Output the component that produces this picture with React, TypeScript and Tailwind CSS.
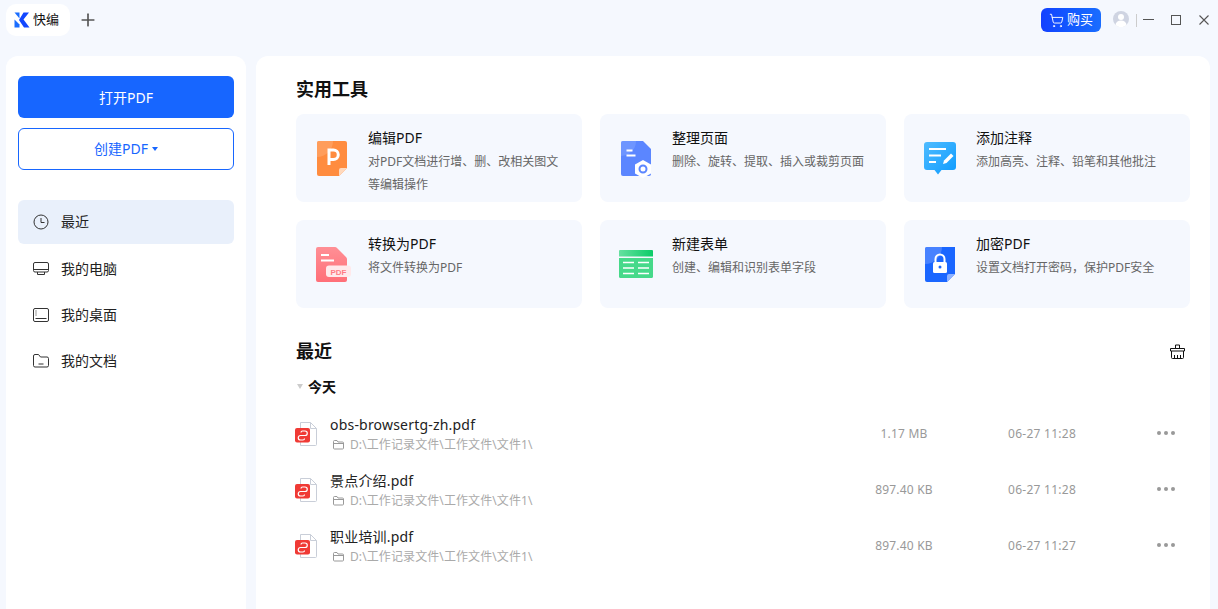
import { Plus, ShoppingCart } from 'lucide-react';
import type { ReactNode } from 'react';

const FONT = "font-['Noto_Sans','Noto_Sans_CJK_SC',sans-serif]";

function Logo() {
  return (
    <svg width="16" height="16" viewBox="0 0 16 16">
      <path d="M0.500 0.500h5v6z" fill="#1a6dff" />
      <path d="M0.500 7.500l5 5v3h-5z" fill="#1a6dff" />
      <path d="M9.500 0.500h5.500L9.500 7.500l6 8h-5.500L5 8z" fill="#1247ff" />
    </svg>
  );
}

function ClockIcon() {
  return (
    <svg width="16" height="16" viewBox="0 0 16 16" fill="none" stroke="#333" strokeWidth="1">
      <circle cx="8" cy="8" r="7" />
      <path d="M8 4v4.500h3.500" />
    </svg>
  );
}

function MonitorIcon() {
  return (
    <svg width="16" height="16" viewBox="0 0 16 16" fill="none" stroke="#333" strokeWidth="1">
      <rect x="0.500" y="1.500" width="15" height="9.500" rx="1.500" />
      <path d="M0.500 8.500h15M4.500 11v2.500h7V11" />
    </svg>
  );
}

function DesktopIcon() {
  return (
    <svg width="16" height="16" viewBox="0 0 16 16" fill="none" stroke="#333" strokeWidth="1">
      <rect x="0.500" y="1.500" width="15" height="13" rx="1.500" />
      <path d="M2.500 11.500h11M2.500 4h1M2.500 6h1M2.500 8h1" />
    </svg>
  );
}

function FolderIcon() {
  return (
    <svg width="16" height="16" viewBox="0 0 16 16" fill="none" stroke="#333" strokeWidth="1">
      <path d="M0.500 3a1.500 1.500 0 0 1 1.500-1.500h3.500l2 2.500h6.500a1.500 1.500 0 0 1 1.500 1.500v7a1.500 1.500 0 0 1-1.500 1.500h-12a1.500 1.500 0 0 1-1.500-1.500z" />
      <path d="M5.500 11h5" />
    </svg>
  );
}

function BasketIcon() {
  return (
    <svg width="15" height="15" viewBox="0 0 15 15" fill="none" stroke="#111" strokeWidth="1">
      <path d="M5.500 4.500V1h4v3.500M0.500 7V4.500h14V7z" />
      <path d="M1.500 7v6.500a1 1 0 0 0 1 1h10a1 1 0 0 0 1-1V7M4.500 14.500V11M7.500 14.500V11M10.500 14.500V11" />
    </svg>
  );
}

function PptIcon() {
  return (
    <svg width="40" height="40" viewBox="0 0 40 40">
      <path d="M7 3h26a2 2 0 0 1 2 2v25l-8 8H7a2 2 0 0 1-2-2V5a2 2 0 0 1 2-2z" fill="#ff8c3f" />
      <path d="M5 5a2 2 0 0 1 2-2h14a16 16 0 0 1-16 16z" fill="#ffa468" opacity="0.7" />
      <path d="M35 30h-6a2 2 0 0 0-2 2v6z" fill="#ffd9bd" />
      <path d="M17 27V12h4.500a4.500 4.500 0 0 1 0 9.500H17" fill="none" stroke="#fff" strokeWidth="3" />
    </svg>
  );
}

function PagesIcon() {
  return (
    <svg width="40" height="40" viewBox="0 0 40 40">
      <path d="M7 3h20l8 8v25a2 2 0 0 1-2 2H7a2 2 0 0 1-2-2V5a2 2 0 0 1 2-2z" fill="#5b86ff" />
      <path d="M5 5a2 2 0 0 1 2-2h13a15 15 0 0 1-15 15z" fill="#7ba0ff" opacity="0.6" />
      <path d="M10.500 12.500h6M10.500 17.500h9" stroke="#fff" strokeWidth="2" />
      <path d="M27 22l8 4.500v9L27 40l-8-4.500v-9z" fill="#fff" />
      <circle cx="27" cy="31" r="3.500" fill="none" stroke="#5b86ff" strokeWidth="2" />
    </svg>
  );
}

function NoteIcon() {
  return (
    <svg width="40" height="40" viewBox="0 0 40 40">
      <defs>
        <linearGradient id="noteFill" x1="0" y1="0" x2="1" y2="1">
          <stop offset="0" stopColor="#4fbcff" />
          <stop offset="1" stopColor="#0d9bff" />
        </linearGradient>
      </defs>
      <path d="M7 4h26a3 3 0 0 1 3 3v22a3 3 0 0 1-3 3H21.500l-3.500 4.500-3.500-4.500H7a3 3 0 0 1-3-3V7a3 3 0 0 1 3-3z" fill="url(#noteFill)" />
      <path d="M9 11h17M9 17.500h12M9 24h7" stroke="#fff" strokeWidth="2" />
      <path d="M23 26l1-3.500 7-7 2.500 2.500-7 7z" fill="#fff" />
    </svg>
  );
}

function ConvertIcon() {
  return (
    <svg width="40" height="40" viewBox="0 0 40 40">
      <defs>
        <linearGradient id="convertFill" x1="0" y1="0" x2="0" y2="1">
          <stop offset="0" stopColor="#ff8f95" />
          <stop offset="1" stopColor="#ff6f78" />
        </linearGradient>
      </defs>
      <path d="M6 3h17a3 3 0 0 1 2 1l9 9a3 3 0 0 1 1 2v21a2 2 0 0 1-2 2H6a2 2 0 0 1-2-2V5a2 2 0 0 1 2-2z" fill="url(#convertFill)" />
      <path d="M9 11h8M9 16.500h13" stroke="#fff" strokeWidth="2" />
      <rect x="14" y="21.500" width="25" height="11.500" rx="3" fill="#ffe9eb" />
      <text x="26.500" y="30.500" textAnchor="middle" fontSize="8" fontWeight="700" fill="#ff7b83" fontFamily="'Liberation Sans',sans-serif">PDF</text>
    </svg>
  );
}

function TableIcon() {
  return (
    <svg width="40" height="40" viewBox="0 0 40 40">
      <defs>
        <linearGradient id="tableHead" x1="0" y1="0" x2="1" y2="0">
          <stop offset="0" stopColor="#66e0a0" />
          <stop offset="1" stopColor="#0ccc68" />
        </linearGradient>
      </defs>
      <path d="M3 7a1 1 0 0 1 1-1h32a1 1 0 0 1 1 1v5.500H3z" fill="url(#tableHead)" />
      <path d="M3 14h34v18.500a1.500 1.500 0 0 1-1.500 1.500h-31A1.500 1.500 0 0 1 3 32.500z" fill="#46d98a" />
      <path d="M7 18.500h11M22 18.500h11M7 24h11M22 24h11M7 29.500h11M22 29.500h11" stroke="#fff" strokeWidth="1.500" />
    </svg>
  );
}

function LockIcon() {
  return (
    <svg width="40" height="40" viewBox="0 0 40 40">
      <path d="M7 3h28v27l-8 8H7a2 2 0 0 1-2-2V5a2 2 0 0 1 2-2z" fill="#1a66ff" />
      <path d="M5 5a2 2 0 0 1 2-2h15a17 17 0 0 1-17 17z" fill="#5b8eff" opacity="0.7" />
      <path d="M35 30h-6a2 2 0 0 0-2 2v6z" fill="#8fb2ff" />
      <rect x="13" y="18" width="14" height="11" rx="1.500" fill="#fff" />
      <path d="M15.500 18v-3a4.500 4.500 0 0 1 9 0v3" fill="none" stroke="#fff" strokeWidth="2" />
      <circle cx="20" cy="23" r="1.500" fill="#1a66ff" />
    </svg>
  );
}

function PdfFileIcon() {
  return (
    <svg className="-ml-px" width="22" height="24" viewBox="0 0 22 24">
      <path d="M5.500 0.500h10l6 6v16a1 1 0 0 1-1 1h-15z" fill="#fff" stroke="#c9ced8" />
      <path d="M15.500 0.500v6h6" fill="none" stroke="#c9ced8" />
      <rect x="0" y="6" width="15" height="14.500" rx="2" fill="#f03a35" />
      <path d="M6 10.500a1.500 1.500 0 0 1 1.500-1.500h2.500a2.200 2.200 0 0 1 0 4.500h-4.500a2.200 2.200 0 0 0 0 4.500h2.500a1.500 1.500 0 0 0 1.500-1.500" fill="none" stroke="#fff" strokeWidth="1.200" />
    </svg>
  );
}

function SmallFolder() {
  return (
    <svg width="11" height="10" viewBox="0 0 11 10" fill="none" stroke="#999" strokeWidth="1">
      <path d="M0.500 1.500a1 1 0 0 1 1-1h2.500l1 1.500h4.500a1 1 0 0 1 1 1v5a1 1 0 0 1-1 1h-8a1 1 0 0 1-1-1zM0.500 3.500h10" />
    </svg>
  );
}

function Avatar() {
  return (
    <svg width="16" height="16" viewBox="0 0 16 16">
      <circle cx="8" cy="8" r="8" fill="#cfd4e2" />
      <circle cx="8" cy="6" r="3" fill="#fff" />
      <path d="M2.500 14a5.500 4.500 0 0 1 11 0 8 8 0 0 1-11 0z" fill="#fff" />
    </svg>
  );
}

const navItems: { icon: ReactNode; label: string; active?: boolean }[] = [
  { icon: <ClockIcon />, label: '最近', active: true },
  { icon: <MonitorIcon />, label: '我的电脑' },
  { icon: <DesktopIcon />, label: '我的桌面' },
  { icon: <FolderIcon />, label: '我的文档' },
];

const tools: { icon: ReactNode; title: string; desc: string }[] = [
  { icon: <PptIcon />, title: '编辑PDF', desc: '对PDF文档进行增、删、改相关图文等编辑操作' },
  { icon: <PagesIcon />, title: '整理页面', desc: '删除、旋转、提取、插入或裁剪页面' },
  { icon: <NoteIcon />, title: '添加注释', desc: '添加高亮、注释、铅笔和其他批注' },
  { icon: <ConvertIcon />, title: '转换为PDF', desc: '将文件转换为PDF' },
  { icon: <TableIcon />, title: '新建表单', desc: '创建、编辑和识别表单字段' },
  { icon: <LockIcon />, title: '加密PDF', desc: '设置文档打开密码，保护PDF安全' },
];

const files = [
  { name: 'obs-browsertg-zh.pdf', size: '1.17 MB', date: '06-27 11:28' },
  { name: '景点介绍.pdf', size: '897.40 KB', date: '06-27 11:28' },
  { name: '职业培训.pdf', size: '897.40 KB', date: '06-27 11:27' },
];

export default function App() {
  return (
    <div className={`h-screen overflow-hidden bg-[#f5f8fe] flex flex-col ${FONT}`}>
      {/* Title bar */}
      <div className="h-[56px] shrink-0 flex items-start pt-[4px] pl-[6px]">
        <div className="h-[32px] w-[64px] bg-white rounded-[10px] flex items-center pl-[8px] gap-[3px]">
          <Logo />
          <span className="text-[13px] text-[#111]">快编</span>
        </div>
        <button className="ml-[8px] h-[32px] w-[20px] flex items-center justify-center text-[#555]">
          <Plus size={20} strokeWidth={2} />
        </button>
        <div className="ml-auto flex items-center pt-[4px] pr-[9px]">
          <button className="w-[60px] h-[24px] rounded-[6px] bg-linear-to-r from-[#1440ff] to-[#1a6dff] text-white text-[13px] flex items-center justify-center gap-[3px]">
            <ShoppingCart size={15} strokeWidth={1.5} />
            购买
          </button>
          <div className="ml-[12px] -mt-[2px]">
            <Avatar />
          </div>
          <div className="ml-[7px] w-px h-[13px] bg-[#ccc]" />
          <div className="ml-[6px] -mt-[2px] w-[11px] h-px bg-[#555]" />
          <div className="ml-[17px] w-[10px] h-[10px] border border-[#555]" />
          <svg className="ml-[18px]" width="10" height="10" viewBox="0 0 10 10" stroke="#555" strokeWidth="1.100">
            <path d="M0.500 0.500l9 9M9.500 0.500l-9 9" />
          </svg>
        </div>
      </div>

      <div className="flex-1 flex gap-[10px] min-h-0 pl-[6px] pr-[8px]">
        {/* Sidebar */}
        <aside className="w-[240px] shrink-0 bg-white rounded-t-[12px] px-[12px] pt-[20px]">
          <button className="w-full h-[42px] rounded-[6px] bg-[#1766ff] text-white text-[14px]">打开PDF</button>
          <button className="mt-[10px] w-full h-[42px] pb-[2px] rounded-[6px] border border-[#1766ff] text-[#1766ff] text-[14px] flex items-center justify-center gap-[4px]">
            创建PDF
            <span className="mt-[2px] w-0 h-0 border-x-[3.5px] border-x-transparent border-t-[4px] border-t-[#1766ff]" />
          </button>
          <nav className="mt-[30px] flex flex-col">
            {navItems.map((item, i) => (
              <div
                key={item.label}
                className={`h-[44px] rounded-[6px] flex items-center pl-[15px] gap-[12px] text-[14px] text-[#222] ${item.active ? 'bg-[#e9f0fb]' : ''} ${i === 1 ? 'mt-[3px]' : i > 1 ? 'mt-[2px]' : ''}`}
              >
                {item.icon}
                <span className="pb-[2px]">{item.label}</span>
              </div>
            ))}
          </nav>
        </aside>

        {/* Main */}
        <main className="flex-1 bg-white rounded-t-[12px] pl-[40px] pr-[20px] pt-[20px]">
          <h2 className="text-[18px] leading-[26px] font-bold text-[#111]">实用工具</h2>
          <div className="mt-[12px] grid grid-cols-[286px_286px_286px] gap-x-[18px] gap-y-[18px]">
            {tools.map((tool) => (
              <div key={tool.title} className="h-[88px] rounded-[8px] bg-[#f5f8fe] flex pl-[16px]">
                <div className="mt-[24px] w-[40px] h-[40px] shrink-0">{tool.icon}</div>
                <div className="ml-[16px] pt-[14px] w-[194px]">
                  <div className="text-[14px] leading-[20px] text-[#111]">{tool.title}</div>
                  <p className="mt-[2px] text-[12px] leading-[23px] text-[#666]">{tool.desc}</p>
                </div>
              </div>
            ))}
          </div>

          <div className="mt-[30px] flex items-center justify-between pr-[5px]">
            <h2 className="text-[18px] leading-[26px] font-bold text-[#111]">最近</h2>
            <BasketIcon />
          </div>
          <div className="mt-[12px] flex items-center h-[20px] text-[14px] font-bold text-[#111]">
            <span className="ml-[1px] w-0 h-0 border-x-[3.5px] border-x-transparent border-t-[5px] border-t-[#ccc]" />
            <span className="ml-[5px]">今天</span>
          </div>

          <div className="mt-[10px] flex flex-col">
            {files.map((file) => (
              <div key={file.name} className="h-[56px] flex items-center">
                <PdfFileIcon />
                <div className="ml-[13px] w-[514px] mt-[2px]">
                  <div className="text-[14px] leading-[20px] text-[#222] tracking-[0.2px]">{file.name}</div>
                  <div className="flex items-center gap-[6px] pl-[3px] text-[12px] leading-[20px] text-[#aaa] tracking-[0.1px]">
                    <SmallFolder />
                    D:\工作记录文件\工作文件\文件1\
                  </div>
                </div>
                <div className="w-[120px] text-center text-[12px] text-[#999] tracking-[0.2px]">{file.size}</div>
                <div className="ml-[44px] w-[68px] text-[12px] text-[#999] whitespace-nowrap tracking-[0.27px]">{file.date}</div>
                <div className="ml-[81px] mb-[2px] flex gap-[3px]">
                  <span className="w-[4px] h-[4px] rounded-full bg-[#999]" />
                  <span className="w-[4px] h-[4px] rounded-full bg-[#999]" />
                  <span className="w-[4px] h-[4px] rounded-full bg-[#999]" />
                </div>
              </div>
            ))}
          </div>
        </main>
      </div>
    </div>
  );
}
